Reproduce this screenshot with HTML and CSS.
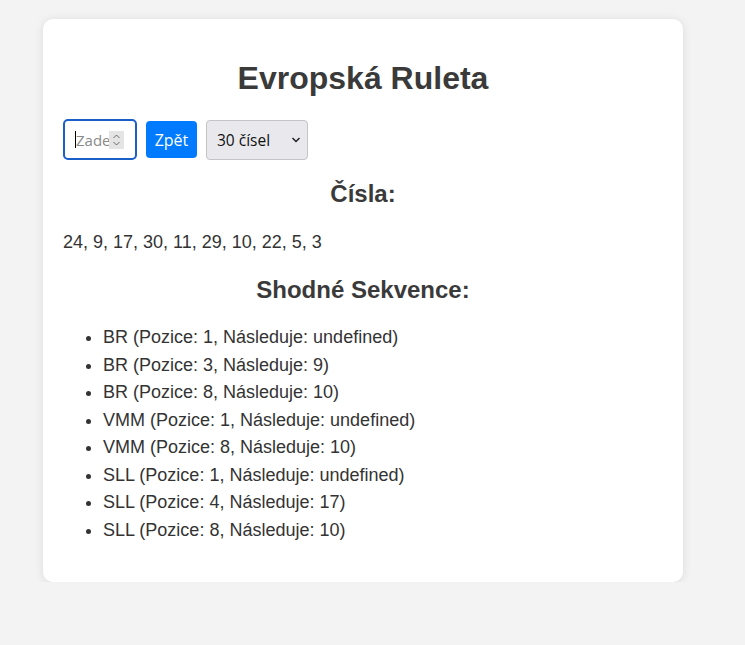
FILE: index.html
```html
<!DOCTYPE html>
<html lang="cs">
<head>
<meta charset="utf-8">
<title>Evropská Ruleta</title>
<link rel="stylesheet" href="styles.css">
</head>
<body>
<div class="card">
  <h1 class="title">Evropská Ruleta</h1>
  <div class="controls">
    <div class="num-input">
      <span class="caret"></span><span class="placeholder">Zade</span>
      <span class="spin"><svg width="9" height="14" viewBox="0 0 9 14"><path d="M1.5 5 L4.5 2 L7.5 5" fill="none" stroke="#6b6b6b" stroke-width="1"/><path d="M1.5 9 L4.5 12 L7.5 9" fill="none" stroke="#6b6b6b" stroke-width="1"/></svg></span>
    </div>
    <button class="btn">Zpět</button>
    <div class="select">
      <span>30 čísel</span>
      <svg width="10" height="6" viewBox="0 0 10 6"><path d="M1.5 1 L5 4.5 L8.5 1" fill="none" stroke="#222" stroke-width="1.5"/></svg>
    </div>
  </div>
  <h2 class="section">Čísla:</h2>
  <p class="numbers">24, 9, 17, 30, 11, 29, 10, 22, 5, 3</p>
  <h2 class="section">Shodné Sekvence:</h2>
  <ul class="list">
    <li>BR (Pozice: 1, Následuje: undefined)</li>
    <li>BR (Pozice: 3, Následuje: 9)</li>
    <li>BR (Pozice: 8, Následuje: 10)</li>
    <li>VMM (Pozice: 1, Následuje: undefined)</li>
    <li>VMM (Pozice: 8, Následuje: 10)</li>
    <li>SLL (Pozice: 1, Následuje: undefined)</li>
    <li>SLL (Pozice: 4, Následuje: 17)</li>
    <li>SLL (Pozice: 8, Následuje: 10)</li>
  </ul>
</div>
</body>
</html>
```
FILE: styles.css
```css
html, body {
  margin: 0;
  background: #f3f3f3;
}
body {
  padding: 19px 0 0 43px;
  font-family: "Liberation Sans", Arial, sans-serif;
  color: #333;
}
.card {
  width: 600px;
  padding: 20px;
  background: #fff;
  border-radius: 10px;
  box-shadow: 0 1px 10px rgba(0,0,0,0.1);
}
.title {
  text-align: center;
  font-size: 32px;
  margin: 21px 0 22px;
  color: #3a3a3a;
}
.controls {
  display: flex;
  align-items: center;
  gap: 9px;
}
.num-input {
  box-sizing: border-box;
  width: 74px;
  height: 41px;
  border: 2px solid #1a5fc8;
  border-radius: 5px;
  display: flex;
  align-items: center;
  padding-left: 10px;
  font-family: "Open Sans", "Noto Sans", sans-serif;
  font-size: 15px;
  color: #8a8a8a;
  overflow: hidden;
}
.caret {
  width: 1px;
  height: 17px;
  background: #000;
}
.placeholder {
  width: 34px;
  overflow: hidden;
  white-space: nowrap;
}
.spin {
  background: #e4e4e4;
  width: 15px;
  height: 18px;
  display: flex;
  align-items: center;
  justify-content: center;
  margin-left: -1px;
}
.btn {
  height: 37px;
  width: 51px;
  padding: 0;
  border: none;
  border-radius: 4px;
  background: #007bff;
  color: #fff;
  font-family: "Open Sans", "Noto Sans", sans-serif;
  font-size: 16px;
}
.select {
  box-sizing: border-box;
  width: 102px;
  height: 40px;
  border: 1px solid #c4c4c4;
  border-radius: 4px;
  background: #e9e9ed;
  display: flex;
  align-items: center;
  justify-content: space-between;
  padding: 0 6px 0 10px;
  font-family: "Open Sans", "Noto Sans", sans-serif;
  font-size: 15.5px;
  color: #111;
}
.section {
  text-align: center;
  font-size: 24px;
  line-height: 28px;
  margin: 20px 0;
  color: #3a3a3a;
}
.numbers {
  font-size: 18px;
  line-height: 21px;
  margin: 24px 0 23px;
}
.list {
  margin: 20px 0 18px;
  padding-left: 40px;
  font-size: 18px;
  line-height: 27.5px;
}
```
